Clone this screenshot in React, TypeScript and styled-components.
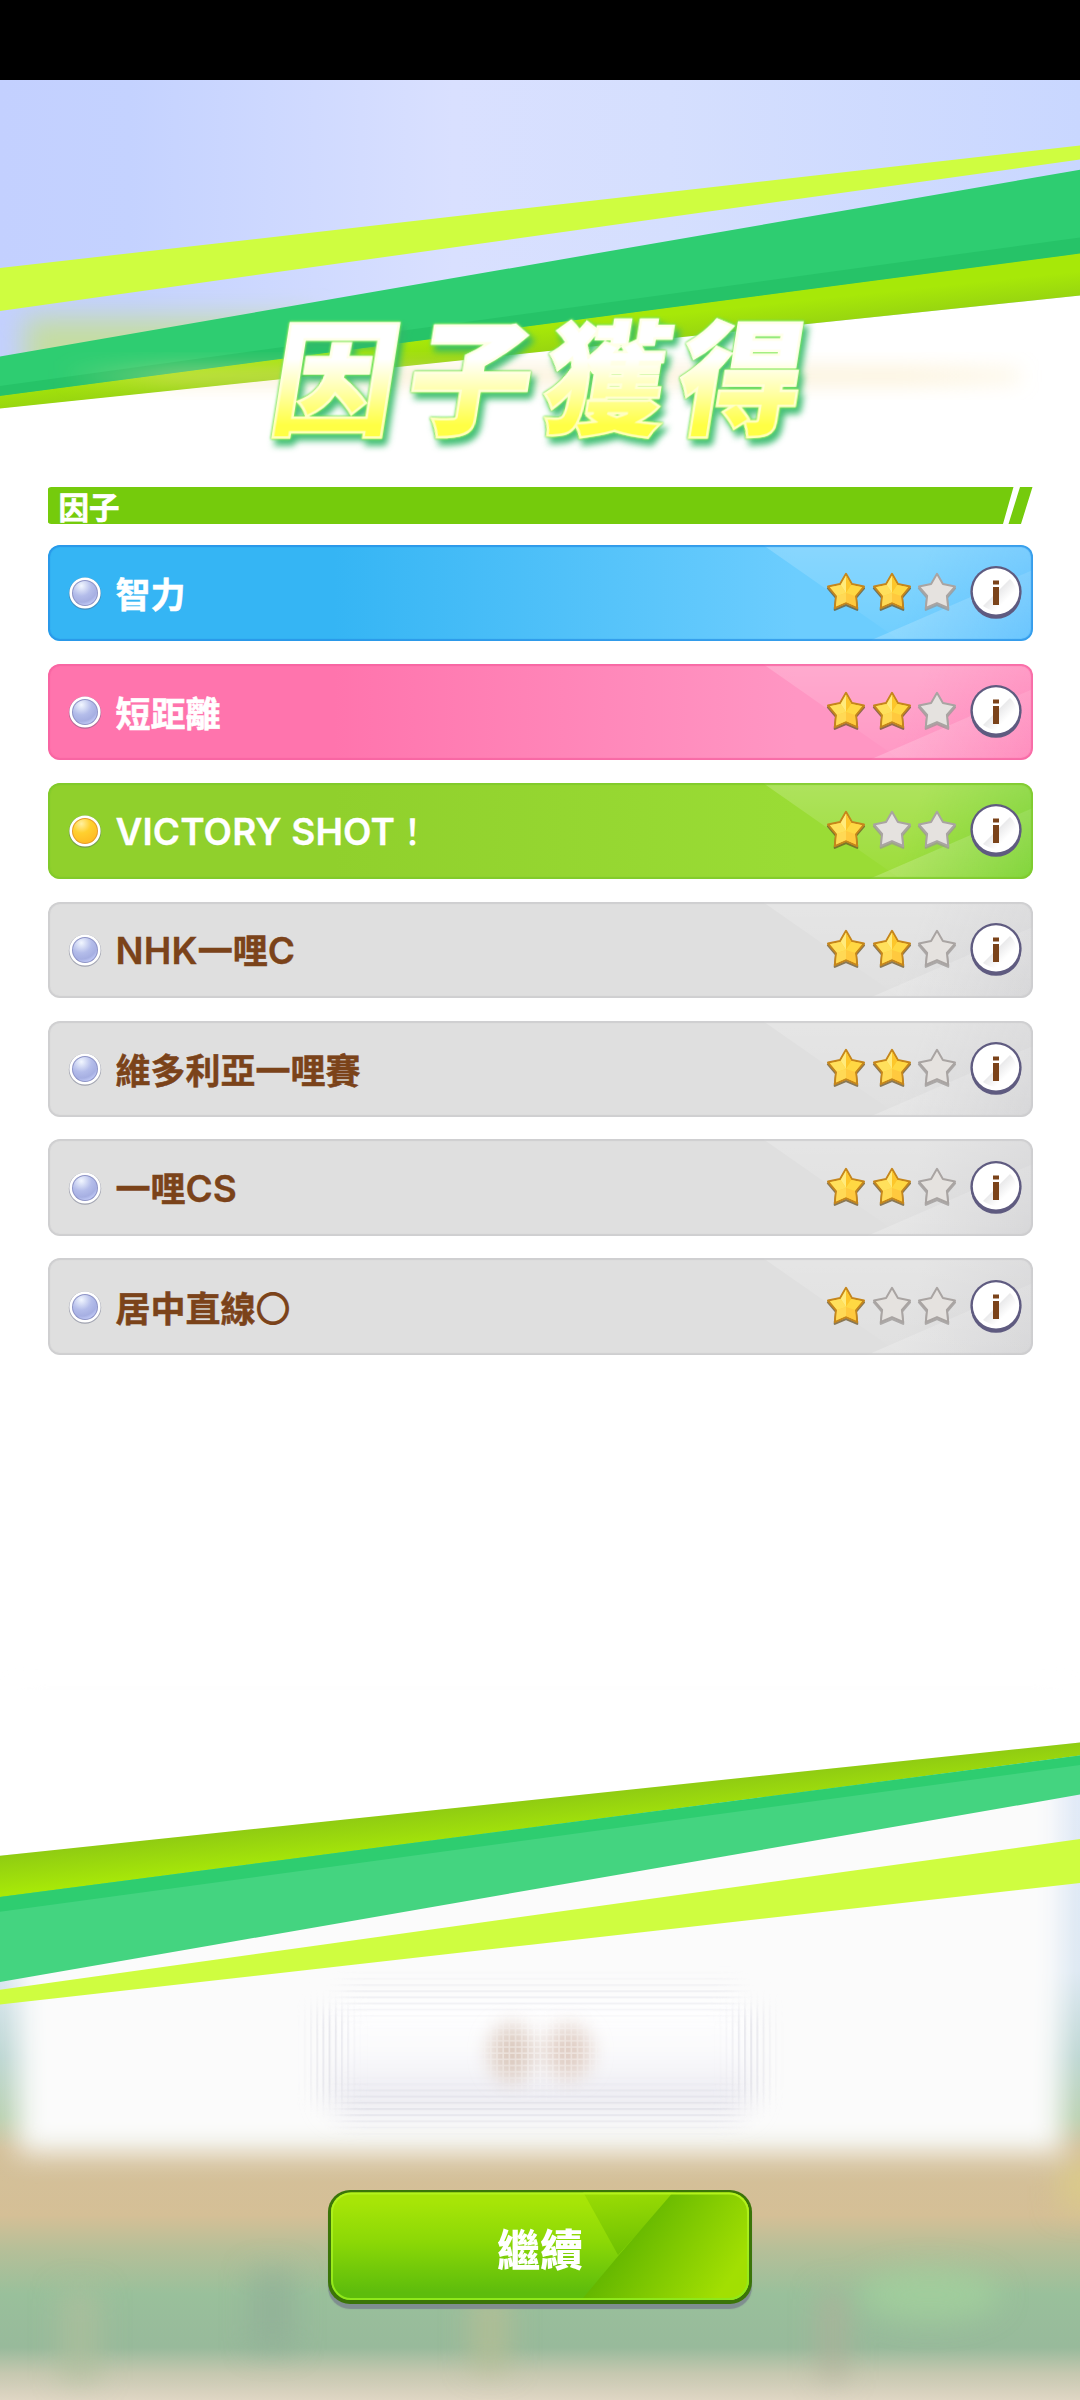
import React from 'react';
import styled, { createGlobalStyle, css } from 'styled-components';

const Global = createGlobalStyle`
  html, body { margin: 0; padding: 0; background: #fff; }
  * { box-sizing: border-box; }
`;

const cjk = `'Noto Sans CJK TC', 'Noto Sans', sans-serif`;

const Screen = styled.main`
  position: relative;
  width: 1080px;
  height: 2400px;
  overflow: hidden;
  display: flex;
  flex-direction: column;
  align-items: center;
  background: #fff;
  font-family: Inter, ${cjk};
`;

const StatusBar = styled.div`
  width: 100%;
  height: 80px;
  flex: none;
  background: #000;
  z-index: 1;
`;

const Backdrop = styled.svg`
  position: absolute;
  inset: 0;
  width: 1080px;
  height: 2400px;
  display: block;
`;

const Title = styled.h1`
  margin: 216px 0 0;
  z-index: 1;
  height: 150px;
  padding: 0 8px 0 20px;
  font: 900 124px/150px ${cjk};
  letter-spacing: 11.5px;
  transform: skewX(-9deg);
  color: transparent;
  background: linear-gradient(180deg, #fff 42%, #ffffb0 62%, #ffff45 86%);
  -webkit-background-clip: text;
  background-clip: text;
  -webkit-text-stroke: 2.5px rgba(255, 255, 225, 0.75);
  filter: drop-shadow(0 0 1px #8cf04a) drop-shadow(0 0 1px #6fe06a)
    drop-shadow(5px 6px 3px rgba(50, 185, 105, 0.9));
`;

const Content = styled.section`
  z-index: 1;
  width: 985px;
  margin-top: 41px;
  display: flex;
  flex-direction: column;
`;

const SectionBar = styled.header`
  display: flex;
  align-items: center;
  height: 37px;
  padding: 0 0 0 11px;
  margin-bottom: 21px;
  color: #fff;
  background: #75cb0c;
  clip-path: path('M4 0H966L955.5 37H4Q0 37 0 33V4Q0 0 4 0ZM972.5 0H985L973.5 37H961Z');
  font: 700 30.5px/34px ${cjk};
  -webkit-text-stroke: 0.7px #fff;
`;

const List = styled.ul`
  list-style: none;
  margin: 0;
  padding: 0;
  display: flex;
  flex-direction: column;
  gap: 22.5px;
`;

type Tone = 'blue' | 'pink' | 'green' | 'grey';

const tones = {
  blue: css`
    color: #fff;
    --edge: #2792e6;
    background: linear-gradient(110deg, transparent 86%, rgba(50, 165, 255, 0.4) 100%),
      linear-gradient(90deg, #35b5f4 29%, #6ccdfe 76%);
  `,
  pink: css`
    color: #fff;
    --edge: #f762a0;
    background: linear-gradient(110deg, transparent 86%, rgba(255, 90, 160, 0.4) 100%),
      linear-gradient(90deg, #ff74ad 29%, #ff96c3 76%);
  `,
  green: css`
    color: #fff;
    --edge: #7ec82b;
    background: linear-gradient(110deg, transparent 86%, rgba(90, 200, 20, 0.65) 100%),
      linear-gradient(90deg, #90d02c 29%, #9adc35 76%);
  `,
  grey: css`
    color: #7b431a;
    --edge: #cbcbcd;
    background: linear-gradient(110deg, transparent 86%, rgba(190, 190, 195, 0.4) 100%), #dfdfdf;
  `,
};

const Row = styled.li<{ $tone: Tone }>`
  ${(p) => tones[p.$tone]}
  position: relative;
  overflow: hidden;
  height: 96.4px;
  border-radius: 12px;
  display: flex;
  align-items: center;
  padding: 0 9.5px 0 20.5px;
  &::after {
    content: '';
    position: absolute;
    inset: 0;
    border-radius: 12px;
    box-shadow: inset 0 0 1px 2px var(--edge);
    opacity: 0.8;
  }
`;

const Shine = styled.svg`
  position: absolute;
  top: 0;
  right: 0;
  width: 270px;
  height: 97px;
`;

const Orb = styled.svg`
  width: 34px;
  height: 34px;
  flex: none;
`;

const Label = styled.span`
  margin-left: 13.5px;
  flex: 1;
  font-size: 35px;
  line-height: 50px;
  font-family: ${cjk};
  font-weight: 700;
  white-space: nowrap;
  -webkit-text-stroke: 0.5px currentColor;
`;

const Latin = styled.span<{ $spacing?: number }>`
  font-family: Inter, 'Liberation Sans', sans-serif;
  font-weight: 600;
  font-size: 37px;
  letter-spacing: ${(p) => p.$spacing ?? 0}px;
  -webkit-text-stroke: 0.3px currentColor;
`;

const Light = styled.span`
  font-weight: 500;
  -webkit-text-stroke: 0.2px currentColor;
`;

const Stars = styled.div`
  display: flex;
  gap: 5.4px;
  margin: 0 12px 2px 0;
  z-index: 1;
`;

const StarIcon = styled.svg`
  width: 40px;
  height: 42px;
  display: block;
  overflow: visible;
`;

const InfoButton = styled.button`
  z-index: 1;
  width: 54px;
  height: 56px;
  padding: 0;
  border: 0;
  background: none;
`;

const Continue = styled.button`
  position: relative;
  z-index: 1;
  margin-top: 835px;
  width: 424px;
  height: 114px;
  flex: none;
  padding: 0;
  border: 0;
  border-radius: 22px;
  overflow: visible;
  color: #fff;
  background: #3b7508;
  box-shadow: 0 5px 1px rgba(120, 130, 140, 0.8);
  font: 900 43px/60px ${cjk};
`;

const ContinueFace = styled.svg`
  position: absolute;
  left: 0;
  top: 0;
  width: 424px;
  height: 114px;
`;

const ContinueText = styled.span`
  position: relative;
`;

const starPath = 'M20 2.8 25.9 13 38 15.6 29.9 25 31.2 37 20 32.1 8.8 37 10.1 25 2 15.6 14.1 13Z';

function Star({ on }: { on: boolean }) {
  return (
    <StarIcon viewBox="0 0 40 42">
      <path d={starPath} transform="translate(0 1.8)" fill="none" stroke={on ? '#6e5526' : '#9a9594'} strokeWidth="2.2" strokeLinejoin="round" opacity="0.75" />
      <path d={starPath} fill={on ? '#ffd23f' : '#e5e2df'} stroke={on ? '#c5861c' : '#a9a4a2'} strokeWidth="2" strokeLinejoin="round" />
      {on && (
        <>
          <path d="M20 4.4V22L14.7 13.9Z" fill="#ffeb7c" />
          <path d="M20 4.4V22L25.3 13.9Z" fill="#fdc62a" />
          <path d="M4 16.2 14.7 13.9 20 22 11 24.9Z" fill="#ffe05c" />
          <path d="M36 16.2 25.3 13.9 20 22 29 24.9Z" fill="#ffd843" />
          <path d="M20 22 11 24.9 10 35.4 20 31Z" fill="#ffd955" />
          <path d="M20 22 29 24.9 30 35.4 20 31Z" fill="#ffc93e" />
        </>
      )}
    </StarIcon>
  );
}

function Info() {
  return (
    <InfoButton aria-label="info">
      <svg width="54" height="56" viewBox="0 0 54 56">
        <circle cx="27" cy="28.6" r="25.2" fill="#5f5b80" />
        <circle cx="27" cy="26.6" r="25.6" fill="#5f5b80" />
        <circle cx="27" cy="26.4" r="23.2" fill="#fff" />
        <path d="M14 41 41 14Q48 20 47 30 43 43 31 47 21 46 14 41Z" fill="url(#infoShade)" />
        <path d="M24 15.4h6v4h-6zM24 22h6v18h-6z" fill="#7b431a" />
      </svg>
    </InfoButton>
  );
}

function Dot({ gold }: { gold?: boolean }) {
  return (
    <Orb viewBox="0 0 34 34">
      <circle cx="17" cy="17.6" r="16.2" fill="#555a78" opacity=".45" />
      <circle cx="17" cy="17" r="15.6" fill="#fff" />
      <circle cx="17" cy="17" r="13" fill={gold ? '#e89a25' : '#8d93c6'} />
      <circle cx="17" cy="17" r="12" fill={gold ? 'url(#orbGold)' : 'url(#orbSilver)'} />
    </Orb>
  );
}

type Factor = { tone: Tone; label: React.ReactNode; stars: number; gold?: boolean };

const factors: Factor[] = [
  { tone: 'blue', label: '智力', stars: 2 },
  { tone: 'pink', label: '短距離', stars: 2 },
  { tone: 'green', label: <><Latin $spacing={0.1}>VICTORY SHOT</Latin><Light>！</Light></>, stars: 1, gold: true },
  { tone: 'grey', label: <><Latin $spacing={0.2}>NHK</Latin>一哩<Latin>C</Latin></>, stars: 2 },
  { tone: 'grey', label: '維多利亞一哩賽', stars: 2 },
  { tone: 'grey', label: <>一哩<Latin>CS</Latin></>, stars: 2 },
  { tone: 'grey', label: <>居中直線<Light>〇</Light></>, stars: 1 },
];

function Scenery() {
  return (
    <Backdrop viewBox="0 0 1080 2400">
      <defs>
        <linearGradient id="sky" x1="0" x2="1" y1="0" y2="0">
          <stop offset="0" stopColor="#c3d0ff" />
          <stop offset=".12" stopColor="#c4d2ff" />
          <stop offset=".42" stopColor="#d9e0ff" />
          <stop offset=".62" stopColor="#d5dffe" />
          <stop offset="1" stopColor="#c9d7ff" />
        </linearGradient>
        <linearGradient id="limeTop" gradientUnits="userSpaceOnUse" x1="540" y1="328" x2="544" y2="366">
          <stop offset="0" stopColor="#a7e808" />
          <stop offset="1" stopColor="#8fcb14" />
        </linearGradient>
        <linearGradient id="limeBottom" gradientUnits="userSpaceOnUse" x1="540" y1="1799" x2="544" y2="1837">
          <stop offset="0" stopColor="#90cc12" />
          <stop offset="1" stopColor="#a7e808" />
        </linearGradient>
        <linearGradient id="glow" x1="0" x2="1" y1="0" y2="0">
          <stop offset="0" stopColor="#f6dfa0" stopOpacity="0" />
          <stop offset=".12" stopColor="#f6dfa0" stopOpacity=".5" />
          <stop offset=".88" stopColor="#f9e6b4" stopOpacity=".55" />
          <stop offset="1" stopColor="#f9e6b4" stopOpacity="0.3" />
        </linearGradient>
        <linearGradient id="ground" gradientUnits="userSpaceOnUse" x1="0" y1="1740" x2="0" y2="2400">
          <stop offset="0" stopColor="#dfe8f8" />
          <stop offset=".35" stopColor="#dbe7f2" />
          <stop offset=".48" stopColor="#b9d4d0" />
          <stop offset=".57" stopColor="#b6cfae" />
          <stop offset=".62" stopColor="#d3c09a" />
          <stop offset=".72" stopColor="#d5bf96" />
          <stop offset=".77" stopColor="#b7bf98" />
          <stop offset=".84" stopColor="#99c09b" />
          <stop offset=".92" stopColor="#98ba9b" />
          <stop offset=".96" stopColor="#c6c8b0" />
          <stop offset="1" stopColor="#dfd6c4" />
        </linearGradient>
        <linearGradient id="oldButton" x1="0" x2="0" y1="0" y2="1">
          <stop offset="0" stopColor="#fff" />
          <stop offset=".5" stopColor="#fafafc" />
          <stop offset="1" stopColor="#e6e5ed" />
        </linearGradient>
        <radialGradient id="orbSilver" cx=".35" cy=".2" r=".85">
          <stop offset="0" stopColor="#f2f7ff" />
          <stop offset=".5" stopColor="#b4bdea" />
          <stop offset=".8" stopColor="#a6afe2" />
          <stop offset="1" stopColor="#c3ccf8" />
        </radialGradient>
        <radialGradient id="orbGold" cx=".35" cy=".2" r=".85">
          <stop offset="0" stopColor="#fff0a0" />
          <stop offset=".45" stopColor="#ffd02f" />
          <stop offset="1" stopColor="#ffba22" />
        </radialGradient>
        <linearGradient id="infoShade" x1=".25" y1=".3" x2=".65" y2=".7">
          <stop offset="0" stopColor="#dedee0" />
          <stop offset="1" stopColor="#fff" />
        </linearGradient>
        <linearGradient id="shineA" x1="0" x2="0" y1="0" y2="1">
          <stop offset="0" stopColor="#fff" stopOpacity=".2" />
          <stop offset="1" stopColor="#fff" stopOpacity=".02" />
        </linearGradient>
        <linearGradient id="shineB" x1="0" x2="1" y1="0" y2="0">
          <stop offset="0" stopColor="#fff" stopOpacity=".22" />
          <stop offset="1" stopColor="#fff" stopOpacity=".1" />
        </linearGradient>
        <pattern id="rows" width="6.2" height="6.2" patternUnits="userSpaceOnUse">
          <rect width="6.2" height="2" fill="#dcdce4" />
        </pattern>
        <pattern id="cols" width="6.2" height="6.2" patternUnits="userSpaceOnUse">
          <rect width="2" height="6.2" fill="#dcdce4" />
        </pattern>
        <pattern id="mesh" width="6.2" height="6.2" patternUnits="userSpaceOnUse">
          <path d="M0 1H6.2M1 0V6.2" stroke="#fff" strokeWidth="1.6" opacity=".4" />
        </pattern>
        <filter id="soft" x="-20%" y="-50%" width="140%" height="200%"><feGaussianBlur stdDeviation="14" /></filter>
        <filter id="soft2" x="-50%" y="-100%" width="200%" height="300%"><feGaussianBlur stdDeviation="10" /></filter>
        <mask id="rowEdge" maskUnits="userSpaceOnUse" x="270" y="1940" width="540" height="230">
          <g filter="url(#soft2)">
            <rect x="345" y="1984" width="390" height="26" fill="#999" />
            <rect x="345" y="2090" width="390" height="34" fill="#ddd" />
          </g>
        </mask>
        <mask id="colEdge" maskUnits="userSpaceOnUse" x="270" y="1940" width="540" height="230">
          <g filter="url(#soft2)">
            <rect x="314" y="2010" width="34" height="90" fill="#ddd" />
            <rect x="732" y="2010" width="34" height="90" fill="#ddd" />
          </g>
        </mask>
        <mask id="blobs" maskUnits="userSpaceOnUse" x="440" y="1980" width="200" height="150">
          <ellipse cx="541" cy="2053" rx="58" ry="32" fill="#fff" filter="url(#soft2)" />
        </mask>
      </defs>
      <rect y="80" width="1080" height="340" fill="url(#sky)" />
      <rect x="25" y="318" width="290" height="60" fill="#c4dda0" filter="url(#soft)" />
      <path d="M0 268 1080 145.4V159.5L0 311Z" fill="#cffd40" />
      <path d="M0 408 1080 295.5V500H0Z" fill="#fff" />
      <path d="M0 356.4 1080 169.8V254L0 396Z" fill="#2ecd71" />
      <path d="M0 386 1080 237.5V254L0 396.5Z" fill="#26c368" />
      <path d="M0 396 1080 253.6V295.5L0 408.5Z" fill="url(#limeTop)" />
      <rect x="60" y="368" width="960" height="16" fill="url(#glow)" filter="url(#soft2)" />

      <rect y="1740" width="1080" height="660" fill="url(#ground)" />
      <g filter="url(#soft)">
        <rect x="250" y="2270" width="45" height="80" fill="#8fab96" opacity=".6" />
        <rect x="470" y="2290" width="40" height="80" fill="#b8be94" opacity=".7" />
        <rect x="60" y="2290" width="40" height="90" fill="#aebf9c" opacity=".7" />
        <rect x="820" y="2290" width="26" height="90" fill="#b0ae99" opacity=".7" />
        <ellipse cx="930" cy="2295" rx="70" ry="26" fill="#a5d49c" opacity=".65" />
        <rect x="1060" y="2160" width="60" height="50" fill="#dac98a" />
        <path d="M18 1700H1062V2153H18Z" fill="#fbfbfb" />
      </g>
      <rect x="330" y="2000" width="420" height="112" rx="20" fill="url(#oldButton)" filter="url(#soft)" />
      <rect x="270" y="1940" width="540" height="230" fill="url(#rows)" mask="url(#rowEdge)" opacity=".75" />
      <rect x="270" y="1940" width="540" height="230" fill="url(#cols)" mask="url(#colEdge)" opacity=".75" />
      <g filter="url(#soft2)">
        <ellipse cx="512" cy="2053" rx="22" ry="28" fill="#dccabf" />
        <ellipse cx="568" cy="2052" rx="23" ry="26" fill="#e0cec4" />
      </g>
      <rect x="440" y="1980" width="200" height="150" fill="url(#mesh)" mask="url(#blobs)" />
      <path d="M0 1690H1080V1742.5L0 1855.7Z" fill="#fff" />
      <path d="M0 1855.7 1080 1742.5V1755.6L0 1897.5Z" fill="url(#limeBottom)" />
      <path d="M0 1897 1080 1755.6V1794.6L0 1982Z" fill="#44d480" />
      <path d="M0 1897 1080 1755.6V1765L0 1911.7Z" fill="#2ecd70" />
      <path d="M0 1989.7 1080 1839V1883L0 2004.5Z" fill="#cffd40" />
    </Backdrop>
  );
}

export default function App() {
  return (
    <Screen>
      <Global />
      <Scenery />
      <StatusBar />
      <Title>因子獲得</Title>
      <Content>
        <SectionBar>因子</SectionBar>
        <List>
          {factors.map((f, i) => (
            <Row key={i} $tone={f.tone}>
              <Shine viewBox="0 0 270 97">
                <path d="M0 0H270V97H139Z" fill="url(#shineA)" />
                <path d="M104 97 270 25V97Z" fill="url(#shineB)" />
              </Shine>
              <Dot gold={f.gold} />
              <Label>{f.label}</Label>
              <Stars>
                {[0, 1, 2].map((n) => (
                  <Star key={n} on={n < f.stars} />
                ))}
              </Stars>
              <Info />
            </Row>
          ))}
        </List>
      </Content>
      <Continue>
        <ContinueFace viewBox="0 0 424 114">
          <defs>
            <linearGradient id="face" x1="0" x2="0" y1="0" y2="1">
              <stop offset=".1" stopColor="#a7e507" />
              <stop offset=".45" stopColor="#8cd806" />
              <stop offset=".9" stopColor="#5dbc0c" />
            </linearGradient>
            <linearGradient id="wedge" x1=".4" x2=".5" y1="0" y2="1">
              <stop offset="0" stopColor="#9bdc04" />
              <stop offset="1" stopColor="#6dc002" />
            </linearGradient>
            <linearGradient id="facet" gradientUnits="userSpaceOnUse" x1="285" y1="50" x2="385" y2="115">
              <stop offset="0" stopColor="#60b400" />
              <stop offset="1" stopColor="#a2df02" />
            </linearGradient>
            <linearGradient id="rim" x1="0" x2="0" y1="0" y2="1">
              <stop offset="0" stopColor="#b4f21c" />
              <stop offset="1" stopColor="#8fe81a" />
            </linearGradient>
            <clipPath id="faceClip"><rect x="3" y="2.5" width="418" height="107.5" rx="20" /></clipPath>
          </defs>
          <g clipPath="url(#faceClip)">
            <rect width="424" height="114" fill="url(#face)" />
            <path d="M254 0H350L290 65Z" fill="url(#wedge)" />
            <path d="M347 0H424V114H250L291 65Z" fill="url(#facet)" />
          </g>
          <rect x="4" y="3.5" width="416" height="105.5" rx="19" fill="none" stroke="url(#rim)" strokeWidth="2" />
        </ContinueFace>
        <ContinueText>繼續</ContinueText>
      </Continue>
    </Screen>
  );
}
